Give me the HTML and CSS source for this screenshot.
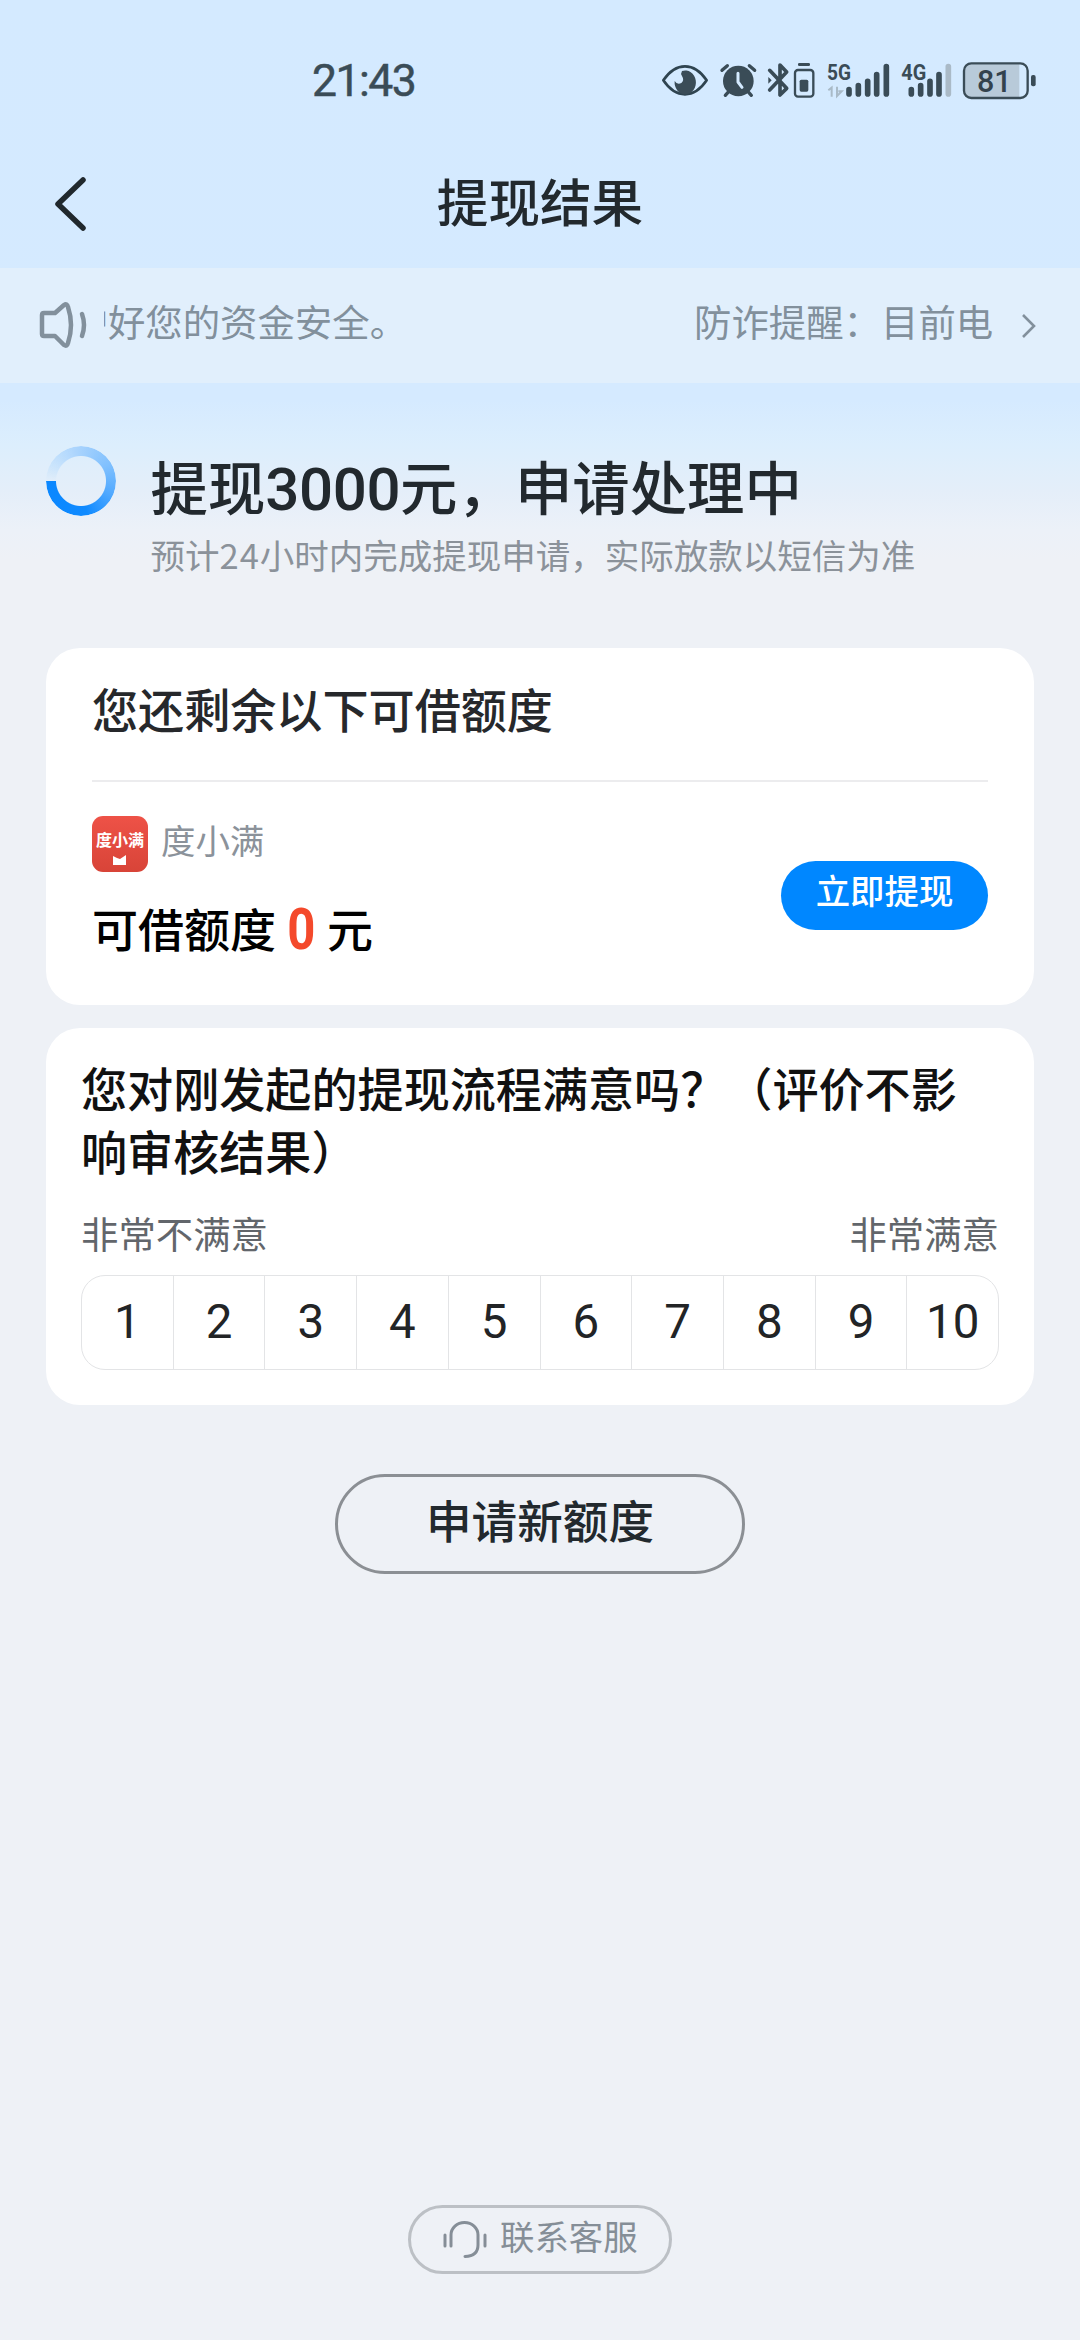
FILE: index.html
```html
<!DOCTYPE html>
<html lang="zh-CN">
<head>
<meta charset="utf-8">
<title>提现结果</title>
<link rel="stylesheet" href="styles.css">
</head>
<body>
<div class="page">
  <div class="status">
    <span class="clock">21:43</span>
    <div class="status-icons">
      <svg width="56.67" height="40" viewBox="60 60 170 120">
        <path d="M70 121 Q98 79 135 79 Q172 79 200 121 Q172 163 135 163 Q98 163 70 121Z" fill="none" stroke="#2f4450" stroke-width="8" stroke-linejoin="round"/>
        <path d="M126 93 A32 36 0 1 1 104 123 Q112 136 124 129 Q134 121 126 108 Q121 101 126 93Z" fill="#3a4c57"/>
      </svg>
      <svg width="46.67" height="40" viewBox="230 60 140 120">
        <circle cx="294" cy="123" r="46" fill="#3a4c57"/>
        <path d="M245 91 L261 77 M343 91 L327 77 M263 157 L255 166 M325 157 L333 166" stroke="#3a4c57" stroke-width="10" stroke-linecap="round"/>
        <path d="M293 100 V126 L305 142" fill="none" stroke="#d4eaff" stroke-width="9" stroke-linecap="round" stroke-linejoin="round"/>
      </svg>
      <svg width="58.33" height="40" viewBox="370 60 175 120">
        <path d="M390 91 L441 145 L421 165 V75 L441 96 L390 150" fill="none" stroke="#3a4c57" stroke-width="11" stroke-linejoin="round" stroke-linecap="round"/>
        <path d="M386 111 V131 L396 121Z" fill="#3a4c57"/>
        <rect x="466" y="90" width="55" height="80" rx="9" fill="none" stroke="#3a4c57" stroke-width="7"/>
        <rect x="475" y="69" width="36" height="9" rx="4" fill="#3a4c57"/>
        <rect x="480" y="119" width="26" height="36" rx="5" fill="#3a4c57"/>
      </svg>
      <svg width="75" height="40" viewBox="545 60 225 120">
        <text class="net" x="560" y="120" textLength="72" lengthAdjust="spacingAndGlyphs">5G</text>
        <path d="M564 151 L574 143 V170 M590 140 V168 L604 154 H594" fill="none" stroke="#a9bac7" stroke-width="6"/>
        <path d="M626 149 V162 M654 137 V162 M682 124 V162 M709 104 V162 M738 80 V162" stroke="#3a4c57" stroke-width="17" stroke-linecap="round"/>
      </svg>
      <svg width="61.67" height="40" viewBox="770 60 185 120">
        <text class="net" x="783" y="120" textLength="75" lengthAdjust="spacingAndGlyphs">4G</text>
        <path d="M813 149 V162 M841 137 V162 M869 124 V162 M896 104 V162" stroke="#3a4c57" stroke-width="17" stroke-linecap="round"/>
        <path d="M924 80 V162" stroke="#aabac7" stroke-width="17" stroke-linecap="round"/>
      </svg>
      <svg width="81.67" height="40" viewBox="955 60 245 120">
        <path d="M994 73 H1139 V171 H994 Q976 171 976 153 V91 Q976 73 994 73Z" fill="#b8cad9"/>
        <rect x="973" y="70" width="191" height="104" rx="22" fill="none" stroke="#3a4c57" stroke-width="7"/>
        <rect x="1174" y="105" width="14" height="34" rx="6" fill="#3a4c57"/>
        <text class="level" x="1012" y="155" textLength="104" lengthAdjust="spacingAndGlyphs">81</text>
      </svg>
    </div>
  </div>

  <div class="nav">
    <svg class="back" width="40" height="60" viewBox="0 0 40 60"><path d="M33 6 L8 30 L33 54" fill="none" stroke="#20282d" stroke-width="5.5" stroke-linecap="round" stroke-linejoin="round"/></svg>
    <h1 class="title">提现结果</h1>
  </div>

  <div class="notice">
    <svg class="horn" width="52" height="48" viewBox="0 0 52 48">
      <path d="M5 13 Q5 11 7 11 H18 L27 3 Q30 1 31 5 Q37 23 31 41 Q30 45 27 43 L18 34 H7 Q5 34 5 32Z" fill="none" stroke="#82909c" stroke-width="4.5" stroke-linejoin="round"/>
      <path d="M45 12 Q49 23 45 34" fill="none" stroke="#82909c" stroke-width="4.5" stroke-linecap="round"/>
    </svg>
    <div class="ticker"><span class="ticker-old">护好您的资金安全。</span><span>防诈提醒：目前电</span></div>
    <svg class="more" width="20" height="30" viewBox="0 0 20 30"><path d="M4 4 L15 15 L4 26" fill="none" stroke="#82909c" stroke-width="2.6"/></svg>
  </div>

  <div class="result">
    <div class="spinner"></div>
    <div class="result-text">
      <h2 class="result-title">提现<span class="amount">3000</span>元，申请处理中</h2>
      <p class="result-sub">预计<span class="hours">24</span>小时内完成提现申请，实际放款以短信为准</p>
    </div>
  </div>

  <section class="card quota">
    <h3 class="quota-head">您还剩余以下可借额度</h3>
    <div class="quota-row">
      <div>
        <div class="brand">
          <span class="logo"><span class="logo-name">度小满</span><svg width="14" height="10" viewBox="0 0 14 10"><path d="M0 1 L4 3 L7 4 L13 0 V10 H0Z" fill="#fff"/></svg></span>
          <span class="brand-name">度小满</span>
        </div>
        <div class="quota-value">可借额度<span class="zero-box"><span class="zero">0</span></span>元</div>
      </div>
      <button class="withdraw">立即提现</button>
    </div>
  </section>

  <section class="card survey">
    <p class="question">您对刚发起的提现流程满意吗？（评价不影响审核结果）</p>
    <div class="ends"><span>非常不满意</span><span>非常满意</span></div>
    <div class="scale">
      <span>1</span><span>2</span><span>3</span><span>4</span><span>5</span><span>6</span><span>7</span><span>8</span><span>9</span><span>10</span>
    </div>
  </section>

  <button class="apply">申请新额度</button>

  <button class="contact">
    <svg width="44" height="38" viewBox="0 0 44 38"><path d="M2 14 V25 M42 14 V25 M8 25 V14 A13.5 12.5 0 0 1 35 14 V24 Q35 35 22 35.5" fill="none" stroke="#858e97" stroke-width="3" stroke-linecap="round"/></svg>
    <span>联系客服</span>
  </button>
</div>
</body>
</html>
```
FILE: styles.css
```css
* { box-sizing: border-box; margin: 0; padding: 0; }
body {
  font-family: "Noto Sans CJK SC", sans-serif;
  color: #22292e;
  background: #eef1f6;
  text-spacing-trim: space-all;
}
h1, h2, h3 { font-weight: 500; }
button { font: inherit; background: none; border: 0; }
svg { display: block; flex: none; }

.page {
  width: 1080px;
  height: 2340px;
  display: flex;
  flex-direction: column;
  background: linear-gradient(#d4eaff 0, #d5eaff 400px, #dceefd 445px, #e4eef9 490px, #ecf1f8 530px, #eef1f6 560px);
  overflow: hidden;
}

.status {
  height: 160px;
  padding: 0 40px 0 312px;
  display: flex;
  align-items: center;
  justify-content: space-between;
}
.clock {
  font: 400 44.5px/1 Roboto, sans-serif;
  letter-spacing: -1.5px;
  color: #3a4c57;
  -webkit-text-stroke: .5px #3a4c57;
  padding-top: 2px;
}
.status-icons { display: flex; }
.net { font: 700 66px Roboto, sans-serif; fill: #3a4c57; }
.level { font: 500 94px Roboto, sans-serif; fill: #33424d; }

.nav {
  height: 108px;
  display: grid;
  grid-template-columns: 90px 1fr 90px;
  align-items: start;
}
.back { margin: 14px 0 0 50px; }
.title { font-size: 51.6px; line-height: 80px; text-align: center; }

.notice {
  height: 115px;
  padding: 0 40px 4px 37px;
  display: flex;
  align-items: center;
  background: #e1effc;
  color: #82909c;
}
.ticker {
  width: 891px;
  margin: -5px 0 0 15px;
  display: flex;
  overflow: hidden;
  white-space: nowrap;
  font-size: 37.4px;
  line-height: 60px;
}
.ticker-old { margin: 0 287px 0 -33.5px; }
.horn { margin-top: 4px; }
.more { margin: 4px 0 0 24px; }

.result { display: flex; padding: 63px 0 0 46px; height: 265px; }
.spinner {
  width: 70px;
  height: 70px;
  border-radius: 50%;
  background: conic-gradient(from 270deg, rgba(150, 205, 255, 0) 0deg, rgba(150, 205, 255, .25) 25deg, #afd6fd 75deg, #80c0fe 150deg, #4fa8ff 205deg, #0f8aff 260deg, #0a87ff 360deg);
  mask: radial-gradient(circle, transparent 24.5px, #000 25.5px);
}
.result-text { margin-left: 34.5px; }
.result-title { height: 80px; font-size: 57.4px; line-height: 78px; white-space: nowrap; }
.amount { font: 500 60px/1 Roboto, sans-serif; letter-spacing: -.4px; }
.result-sub { font-size: 34.5px; line-height: 56px; color: #8b929a; white-space: nowrap; }
.hours { letter-spacing: 1px; }

.card { width: 988px; margin: 0 auto; background: #fff; border-radius: 34px; }
.quota { height: 357px; padding: 0 46px; }
.quota-head {
  height: 134px;
  line-height: 120px;
  font-size: 46.1px;
  border-bottom: 2px solid #ececee;
  color: #26282b;
}
.quota-row { display: flex; justify-content: space-between; }
.brand { display: flex; align-items: center; height: 56px; margin-top: 34px; }
.logo {
  width: 56px;
  height: 56px;
  padding-top: 10px;
  border-radius: 11px;
  background: linear-gradient(#ee5247, #d84438);
  display: flex;
  flex-direction: column;
  align-items: center;
  gap: 3px;
}
.logo-name { font-size: 16px; line-height: 26px; font-weight: 700; color: #fff; }
.brand-name { margin: -10px 0 0 13px; font-size: 34.4px; color: #8b929a; }
.quota-value {
  display: flex;
  margin-top: 25px;
  font-size: 46px;
  line-height: 60px;
  font-weight: 500;
  color: #000;
}
.zero-box { width: 51px; display: flex; justify-content: center; }
.zero {
  padding-top: 3px;
  font: 700 57px/60px Roboto, sans-serif;
  color: #f4492b;
  transform: scaleX(.86);
}
.withdraw {
  width: 207px;
  height: 69px;
  margin-top: 79px;
  padding-bottom: 12px;
  border-radius: 35px;
  background: #0087ff;
  color: #fff;
  font-size: 34.4px;
  line-height: 57px;
  font-weight: 500;
}

.survey { height: 377px; margin-top: 23px; padding: 28px 35px 0; }
.question { font-size: 46.1px; line-height: 63px; font-weight: 500; color: #111; }
.ends {
  display: flex;
  justify-content: space-between;
  margin-top: 23px;
  font-size: 37.4px;
  line-height: 56px;
  color: #62666b;
}
.scale {
  display: flex;
  height: 95px;
  margin-top: 14px;
  border: 1px solid #e3e4e6;
  border-radius: 24px;
  font: 400 47.5px/92px Roboto, sans-serif;
  color: #222426;
}
.scale span { flex: 1; text-align: center; }
.scale span + span { border-left: 1px solid #e3e4e6; }

.apply {
  width: 410px;
  height: 100px;
  margin: 69px auto 0;
  padding-bottom: 9px;
  border: 3px solid #8b8f94;
  border-radius: 50px;
  font-size: 45.6px;
  line-height: 85px;
  font-weight: 500;
  color: #22292e;
}
.contact {
  width: 264px;
  height: 69px;
  margin: auto auto 66px;
  padding-left: 32px;
  display: flex;
  align-items: center;
  gap: 13px;
  border: 3px solid #bcc0c5;
  border-radius: 35px;
  font-size: 34.4px;
  line-height: 56px;
  color: #858e97;
}
.contact span { margin-top: -10px; }
```
